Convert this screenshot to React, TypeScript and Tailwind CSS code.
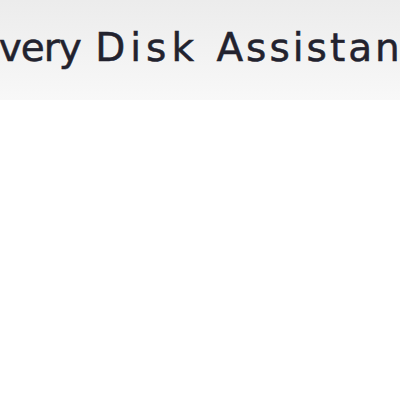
export default function App() {
  return (
    <div className="w-[400px] h-[400px] bg-white overflow-hidden">
      <div className="h-[100px] bg-gradient-to-b from-[#ececec] to-[#f8f8f8] overflow-hidden flex items-start">
        <div
          className="whitespace-nowrap ml-[-92px] mt-[25px] text-[39px] leading-[46px] text-[#22222e] [-webkit-text-stroke:0.5px_#22222e]"
          style={{ fontFamily: '"DejaVu Sans", Verdana, sans-serif' }}
        >
          <span className="tracking-[-1px] mr-[3px]">Recovery </span>
          <span className="tracking-[5px]">Disk </span>
          <span className="tracking-[3px]">Assistant</span>
        </div>
      </div>
    </div>
  );
}
